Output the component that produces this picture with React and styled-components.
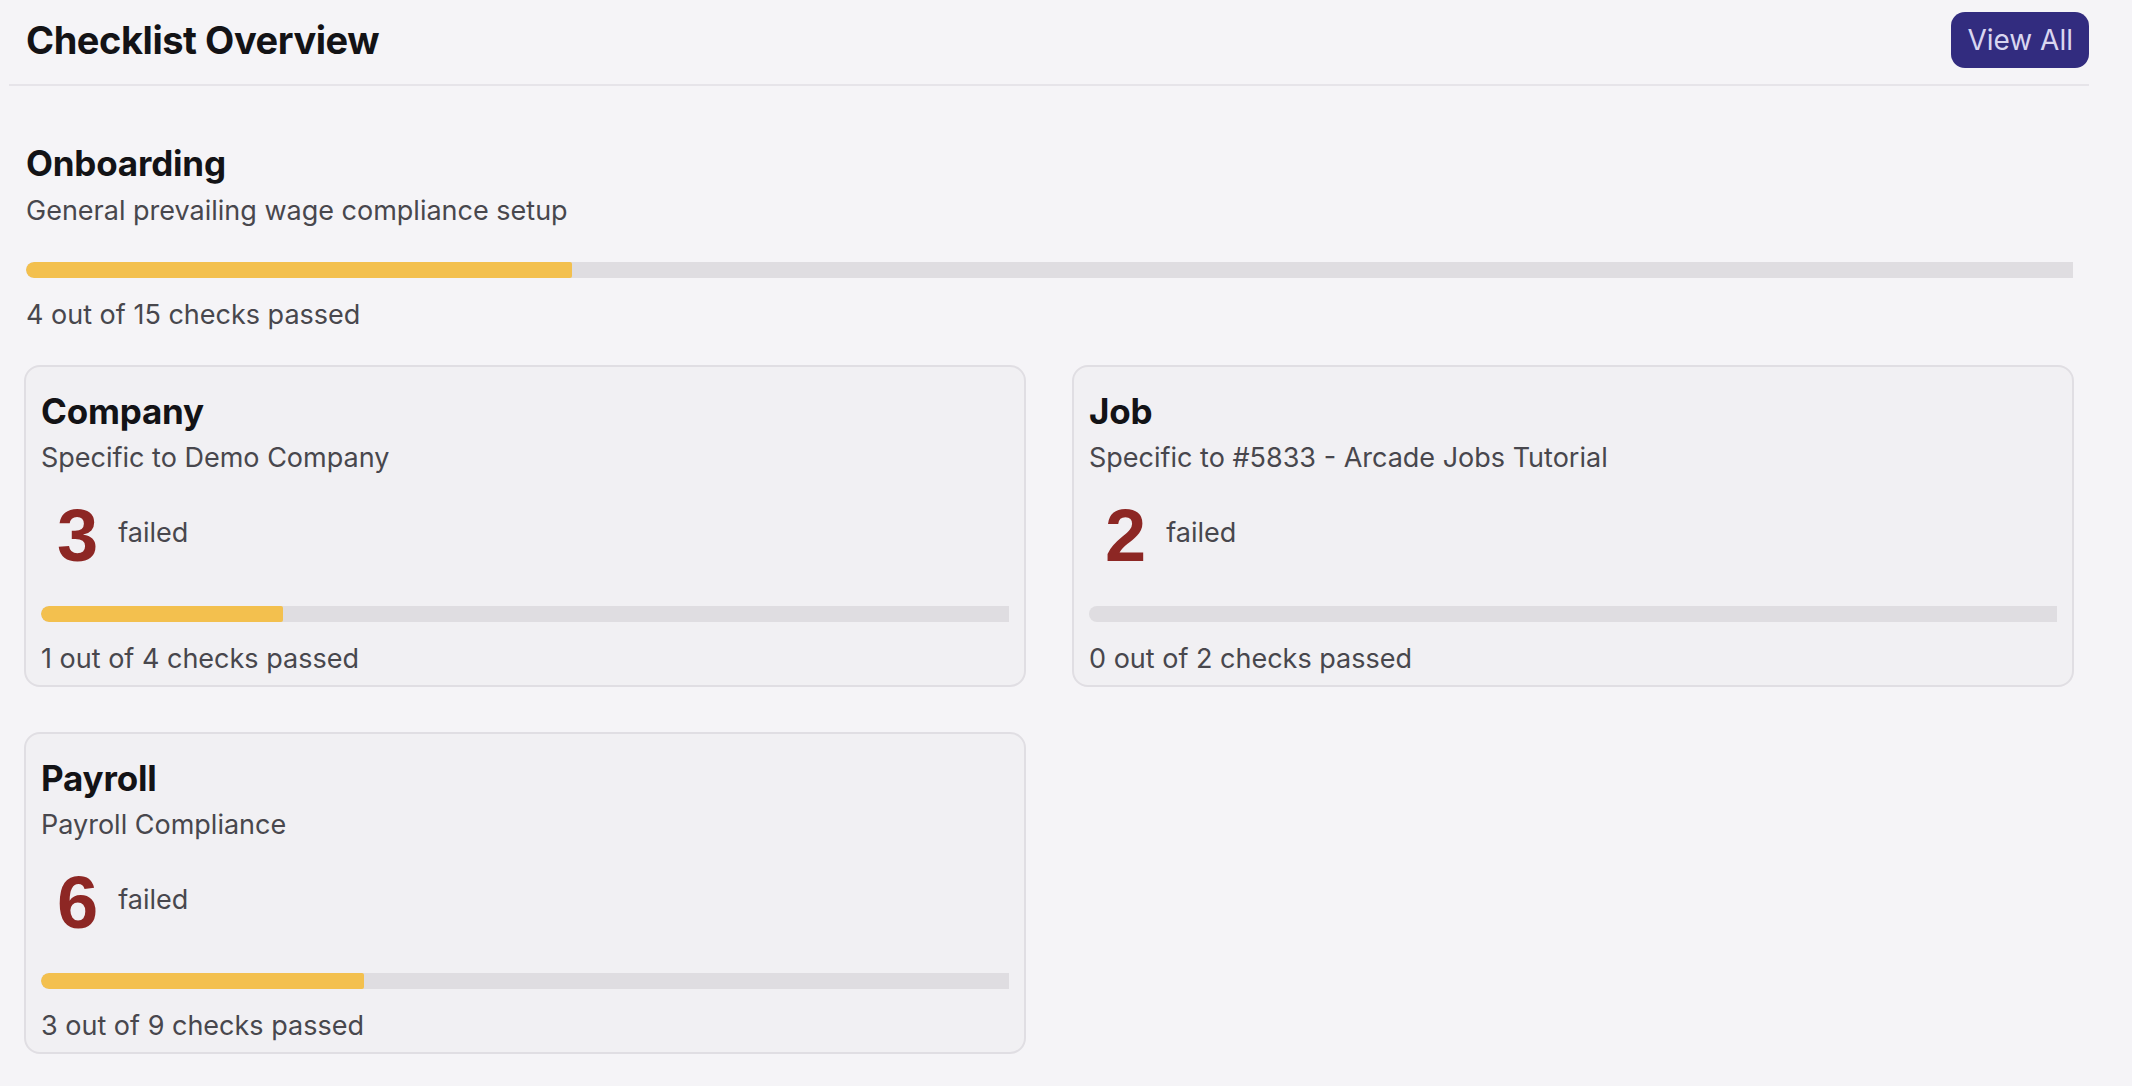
import React from 'react';
import styled, { createGlobalStyle } from 'styled-components';

const GlobalStyle = createGlobalStyle`
  html, body {
    margin: 0;
    padding: 0;
    background: #f5f4f7;
  }
  body {
    font-family: Inter, "Noto Sans", "Liberation Sans", sans-serif;
    color: #131316;
  }
  * {
    box-sizing: border-box;
  }
`;

const groups = [
  { title: 'Company', subtitle: 'Specific to Demo Company', failed: 3, passed: 1, total: 4 },
  { title: 'Job', subtitle: 'Specific to #5833 - Arcade Jobs Tutorial', failed: 2, passed: 0, total: 2 },
  { title: 'Payroll', subtitle: 'Payroll Compliance', failed: 6, passed: 3, total: 9 },
];

const Page = styled.div`
  width: 2089px;
  padding-left: 9px;
`;

const Header = styled.header`
  display: flex;
  align-items: center;
  justify-content: space-between;
  padding: 12px 0 16px 17px;
  border-bottom: 2px solid #e6e4e9;
`;

const PageTitle = styled.h1`
  margin: 0;
  font-size: 38px;
  line-height: 56px;
  font-weight: 700;
  letter-spacing: -0.45px;
  color: #131316;
`;

const ViewAllButton = styled.button`
  height: 56px;
  padding: 0 16px;
  border: none;
  border-radius: 14px;
  background: #322c7f;
  color: #d9d6f0;
  font-family: Inter, "Noto Sans", sans-serif;
  font-size: 28px;
  font-weight: 400;
  cursor: pointer;
`;

const Body = styled.main`
  padding: 0 15px;
`;

const Overview = styled.section`
  padding: 57px 1px 33px 2px;
`;

const Title = styled.h2`
  margin: 0;
  font-size: 35px;
  line-height: 40px;
  font-weight: 700;
  letter-spacing: -0.2px;
  color: #131316;
`;

const Subtitle = styled.p`
  margin: ${({ $gap }) => $gap}px 0 0;
  font-size: 27px;
  line-height: 34px;
  color: #48474d;
`;

const Track = styled.div`
  height: 16px;
  margin-top: ${({ $gap }) => $gap}px;
  background: #dfdde1;
  border-radius: 8px 0 0 8px;
  overflow: hidden;
`;

const Fill = styled.div`
  height: 100%;
  background: #f3c04e;
  border-radius: 8px 2px 2px 8px;
`;

const Status = styled.p`
  margin: 20px 0 0;
  font-size: 27px;
  line-height: 34px;
  color: #48474d;
`;

const Grid = styled.div`
  display: grid;
  grid-template-columns: 1fr 1fr;
  column-gap: 46px;
  row-gap: 45px;
`;

const Card = styled.article`
  padding: 24px 15px 9px;
  border: 2px solid #e0dee3;
  border-radius: 16px;
  background: #f1f0f3;
`;

const FailedRow = styled.div`
  display: flex;
  align-items: center;
  gap: 20px;
  margin-top: 25px;
  padding-left: 16px;
`;

const FailedCount = styled.span`
  font-family: "Liberation Sans", Arial, sans-serif;
  font-size: 74px;
  line-height: 72px;
  font-weight: 700;
  color: #8d2724;
`;

const FailedLabel = styled.span`
  margin-bottom: 6px;
  font-size: 27px;
  line-height: 34px;
  color: #48474d;
`;

const Progress = ({ passed, total, gap }) => (
  <Track $gap={gap}>
    <Fill style={{ width: `${(passed / total) * 100}%` }} />
  </Track>
);

const GroupCard = ({ title, subtitle, failed, passed, total }) => (
  <Card>
    <Title>{title}</Title>
    <Subtitle $gap={10}>{subtitle}</Subtitle>
    <FailedRow>
      <FailedCount>{failed}</FailedCount>
      <FailedLabel>failed</FailedLabel>
    </FailedRow>
    <Progress passed={passed} total={total} gap={34} />
    <Status>
      {passed} out of {total} checks passed
    </Status>
  </Card>
);

export default function App() {
  return (
    <>
      <GlobalStyle />
      <Page>
        <Header>
          <PageTitle>Checklist Overview</PageTitle>
          <ViewAllButton>View All</ViewAllButton>
        </Header>
        <Body>
          <Overview>
            <Title>Onboarding</Title>
            <Subtitle $gap={11}>General prevailing wage compliance setup</Subtitle>
            <Progress passed={4} total={15} gap={34} />
            <Status>4 out of 15 checks passed</Status>
          </Overview>
          <Grid>
            {groups.map((g) => (
              <GroupCard key={g.title} {...g} />
            ))}
          </Grid>
        </Body>
      </Page>
    </>
  );
}
